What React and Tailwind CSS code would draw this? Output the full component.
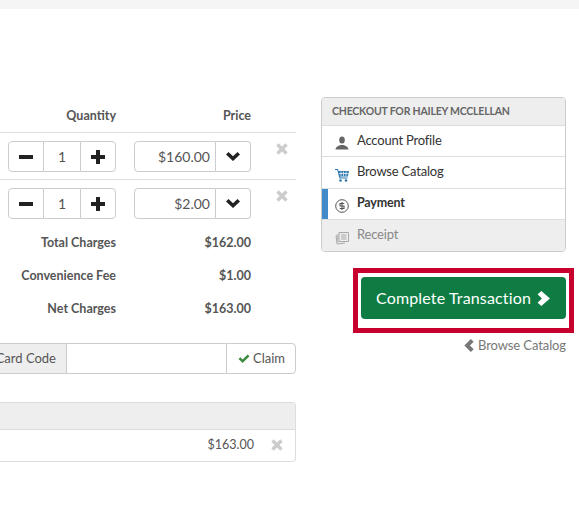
import React from 'react';

const GRIP = 'bg-white border border-[#ccc]';

function ChevronDown({ className = '' }) {
  return (
    <svg viewBox="0 0 14 9" className={className} fill="currentColor">
      <path d="M2.5 0 L0 2.5 L7 9 L14 2.5 L11.5 0 L7 4.2 Z" />
    </svg>
  );
}

function ChevronRight({ className = '' }) {
  return (
    <svg viewBox="0 0 12 14" className={className} fill="currentColor">
      <path d="M4 0 L0.5 3 L4.5 7 L0.5 11 L4 14 L12 7 Z" />
    </svg>
  );
}

function ChevronLeft({ className = '' }) {
  return (
    <svg viewBox="0 0 10 14" className={className} fill="currentColor">
      <path d="M7 0 L10 3 L6 7 L10 11 L7 14 L0 7 Z" />
    </svg>
  );
}

function Cross({ className = '' }) {
  return (
    <svg viewBox="0 0 12 12" className={className} fill="none" stroke="currentColor" strokeWidth="3.4">
      <path d="M1.5 1.5 L10.5 10.5 M10.5 1.5 L1.5 10.5" />
    </svg>
  );
}

function ItemRow({ price, className = '' }) {
  return (
    <div className={`flex pl-2 pt-2 ${className}`}>
      <div className="flex h-[31px] w-[108px] text-[#555]">
        <div className={`${GRIP} w-[36px] rounded-l-[4px] flex items-center justify-center`}>
          <div className="w-[14px] h-[4px] bg-[#222]" />
        </div>
        <div className="w-[36px] border-y border-[#ccc] flex items-center justify-center text-[14px]">1</div>
        <div className={`${GRIP} w-[36px] rounded-r-[4px] flex items-center justify-center relative`}>
          <div className="w-[14px] h-[4px] bg-[#222]" />
          <div className="absolute w-[4px] h-[14px] bg-[#222]" />
        </div>
      </div>
      <div className="flex h-[31px] w-[117px] ml-[18px]">
        <div className="flex-1 border border-[#ccc] rounded-l-[4px] flex items-center justify-end pr-[5px] text-[14px] text-[#555]">{price}</div>
        <div className="w-[35px] border-y border-r border-[#ccc] rounded-r-[4px] flex items-center justify-center text-[#222]">
          <ChevronDown className="w-[14px] h-[9px]" />
        </div>
      </div>
      <Cross className="w-[12px] h-[12px] ml-[25px] mt-[2px] text-[#ccc]" />
    </div>
  );
}

function SumRow({ label, value }) {
  return (
    <div className="h-[33px] flex items-center text-[12.5px] font-bold text-[#555]">
      <div className="w-[116px] text-right">{label}</div>
      <div className="w-[135px] text-right">{value}</div>
    </div>
  );
}

function NavRow({ icon, label, active, disabled, className = '' }) {
  return (
    <div className={`border-t border-[#ddd] flex items-center pl-[13px] relative ${disabled ? 'bg-[#eee] text-[#888]' : 'bg-white text-[#333]'} ${className}`}>
      {active && <div className="absolute left-0 top-0 bottom-0 w-[6px] bg-[#428bca]" />}
      <div className="w-[22px] flex justify-start mt-[4px]">{icon}</div>
      {active
        ? <span className="text-[12.5px] font-bold tracking-[-0.2px] -mt-[1px]">{label}</span>
        : <span className="text-[13px] tracking-[-0.2px] -mt-[1px]">{label}</span>}
    </div>
  );
}

export default function App() {
  return (
    <div className="w-[579px] h-[526px] overflow-hidden bg-white font-['Lato',sans-serif] text-[#555]">
      <div className="h-[9px] bg-[#f5f5f5]" />
      <div className="flex pt-[88px]">
        <div className="w-[296px] shrink-0">
          <div className="h-[35px] pt-[4px] flex items-center text-[12.5px] font-bold">
            <div className="w-[116px] text-right">Quantity</div>
            <div className="w-[135px] text-right">Price</div>
          </div>
          <div className="border-t border-[#ddd]">
            <ItemRow price="$160.00" className="h-[47px] border-b border-[#ddd]" />
            <ItemRow price="$2.00" className="h-[47px]" />
          </div>
          <SumRow label="Total Charges" value="$162.00" />
          <SumRow label="Convenience Fee" value="$1.00" />
          <SumRow label="Net Charges" value="$163.00" />
          <div className="flex h-[31px] mt-[17px] text-[13px]">
            <div className="w-[67px] bg-[#eee] border-y border-r border-[#ccc] flex items-center justify-end pr-[10px] whitespace-nowrap overflow-hidden">Card Code</div>
            <div className="w-[159px] border-y border-[#ccc]" />
            <div className="flex-1 border border-[#ccc] rounded-r-[4px] flex items-center justify-center">
              <svg viewBox="0 0 14 12" className="w-[14px] h-[11px] mr-[2px] text-[#3d8b40]" fill="currentColor">
                <path d="M1 6.5 L3 4.5 L5.5 7 L11 1.5 L13 3.5 L5.5 11 Z" />
              </svg>
              Claim
            </div>
          </div>
          <div className="mt-[28px] h-[60px] border-y border-r border-[#ddd] rounded-r-[4px] overflow-hidden">
            <div className="h-[27px] bg-[#eee] border-b border-[#ddd]" />
            <div className="h-[30px] flex items-center justify-end text-[12.5px]">
              <span className="mr-[17px]">$163.00</span>
              <Cross className="w-[12px] h-[12px] mr-[12px] text-[#ccc]" />
            </div>
          </div>
        </div>
        <div className="w-[245px] ml-[25px] shrink-0">
          <div className="border border-[#ccc] rounded-[4px] overflow-hidden">
            <div className="h-[27px] bg-[#eee] flex items-center pl-[10px] text-[10.5px] tracking-[-0.2px] font-bold text-[#666] uppercase">Checkout for Hailey McClellan</div>
            <NavRow className="h-[31px]" label="Account Profile" icon={
              <svg viewBox="0 0 14 14" className="w-[14px] h-[14px] text-[#666]" fill="currentColor">
                <ellipse cx="7" cy="4" rx="2.8" ry="3.6" /><path d="M0.5 13.5 C0.8 10.5 3.5 10 5.5 9 L8.5 9 C10.5 10 13.2 10.5 13.5 13.5 Z" />
              </svg>
            } />
            <NavRow className="h-[32px]" label="Browse Catalog" icon={
              <svg viewBox="0 0 14 14" className="w-[14px] h-[14px] text-[#2f78ad]" fill="currentColor">
                <path d="M0 1 H3 L3.6 3 H14 L12.8 8.5 H5.2 L5.5 9.5 H12.5 V10.5 H4.5 L2.3 2 H0 Z" />
                <circle cx="5.5" cy="12.5" r="1.3" /><circle cx="11" cy="12.5" r="1.3" />
                <path d="M6 3.5 V8 M8.5 3.5 V8 M11 3.5 V8 M4 5.5 H13.5" stroke="#fff" strokeWidth="0.7" />
              </svg>
            } />
            <NavRow active className="h-[31px]" label="Payment" icon={
              <svg viewBox="0 0 14 14" className="w-[14px] h-[14px] text-[#555]" fill="none" stroke="currentColor" strokeWidth="1">
                <circle cx="7" cy="7" r="6.3" /><path d="M9.3 4.5 H5 V7 H9 V9.5 H4.7 M7 3 V11" strokeWidth="1.1" />
              </svg>
            } />
            <NavRow disabled className="h-[32px]" label="Receipt" icon={
              <svg viewBox="0 0 14 14" className="w-[14px] h-[14px] text-[#aaa]" fill="none" stroke="currentColor" strokeWidth="1">
                <path d="M4 1.5 H13.5 V10.5 H4 Z M4 3.5 L1 4.5 L2 13 L10 12 M2.5 5 L3 11.5 M6 4 H11.5 M6 6 H11.5 M6 8 H11.5" />
              </svg>
            } />
          </div>
          <div className="mt-[16px] ml-[32px] w-[221px] h-[65px] border-[5px] border-[#c8002d] flex justify-center pt-[4px]">
            <div className="w-[205px] h-[42px] pl-[15px] bg-[#0f7d43] rounded-[4px] flex items-center text-white text-[16px] tracking-[0.15px] shrink-0">
              Complete Transaction
              <ChevronRight className="w-[13px] h-[15px] ml-[6px]" />
            </div>
          </div>
          <div className="mt-[3px] flex items-center justify-end text-[13px] tracking-[-0.1px] text-[#777]">
            <ChevronLeft className="w-[10px] h-[13px] mr-[4px]" />
            Browse Catalog
          </div>
        </div>
      </div>
    </div>
  );
}
